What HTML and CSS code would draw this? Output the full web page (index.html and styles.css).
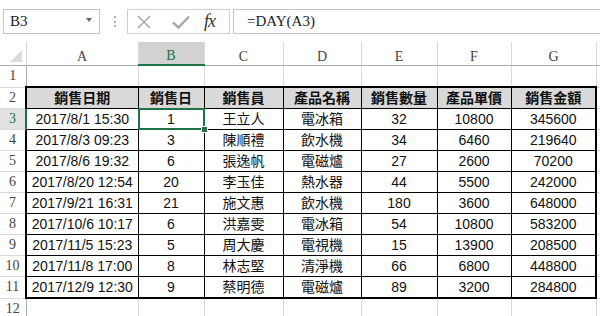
FILE: index.html
```html
<!doctype html>
<html lang="zh-Hant">
<head>
    <meta charset="UTF-8">
    <title>Excel - DAY</title>
    <link rel="stylesheet" href="styles.css">
</head>
<body>
<div class="toolbar">
    <div class="name-box">
        <span>B3</span>
        <i class="arrow"></i>
    </div>
    <i class="dots"></i>
    <div class="tools">
        <svg class="ico" width="16" height="16" viewBox="0 0 16 16"><path d="M2 2L14 14M14 2L2 14" stroke="#a8a8a8" stroke-width="1.6" fill="none"/></svg>
        <svg class="ico" width="20" height="16" viewBox="0 0 20 16"><path d="M2 8.5L7.5 13.5L18 2.5" stroke="#a8a8a8" stroke-width="2.4" fill="none"/></svg>
        <span class="fx">fx</span>
    </div>
    <div class="formula">=DAY(A3)</div>
</div>
<div class="grid">
    <table class="sheet">
        <colgroup>
            <col class="c-head">
            <col class="c-a">
            <col class="c-b">
            <col class="c-c">
            <col class="c-d">
            <col class="c-e">
            <col class="c-f">
            <col class="c-g">
            <col class="c-h">
        </colgroup>
        <tr class="letters">
            <th class="corner"><i class="tri"></i></th>
            <th>A</th><th class="on">B</th><th>C</th><th>D</th><th>E</th><th>F</th><th>G</th><th></th>
        </tr>
        <tr>
            <th class="num">1</th>
            <td></td><td></td><td></td><td></td><td></td><td></td><td></td><td></td>
        </tr>
        <tr class="top head">
            <th class="num">2</th>
            <td class="a">銷售日期</td><td>銷售日</td><td>銷售員</td><td>產品名稱</td><td>銷售數量</td><td>產品單價</td><td class="g">銷售金額</td><td class="out"></td>
        </tr>
        <tr>
            <th class="num on">3</th>
            <td class="a">2017/8/1 15:30</td><td class="sel">1<div class="cursor"></div></td><td>王立人</td><td>電冰箱</td><td>32</td><td>10800</td><td class="g">345600</td><td class="out"></td>
        </tr>
        <tr>
            <th class="num">4</th>
            <td class="a">2017/8/3 09:23</td><td>3</td><td>陳順禮</td><td>飲水機</td><td>34</td><td>6460</td><td class="g">219640</td><td class="out"></td>
        </tr>
        <tr>
            <th class="num">5</th>
            <td class="a">2017/8/6 19:32</td><td>6</td><td>張逸帆</td><td>電磁爐</td><td>27</td><td>2600</td><td class="g">70200</td><td class="out"></td>
        </tr>
        <tr>
            <th class="num">6</th>
            <td class="a">2017/8/20 12:54</td><td>20</td><td>李玉佳</td><td>熱水器</td><td>44</td><td>5500</td><td class="g">242000</td><td class="out"></td>
        </tr>
        <tr>
            <th class="num">7</th>
            <td class="a">2017/9/21 16:31</td><td>21</td><td>施文惠</td><td>飲水機</td><td>180</td><td>3600</td><td class="g">648000</td><td class="out"></td>
        </tr>
        <tr>
            <th class="num">8</th>
            <td class="a">2017/10/6 10:17</td><td>6</td><td>洪嘉雯</td><td>電冰箱</td><td>54</td><td>10800</td><td class="g">583200</td><td class="out"></td>
        </tr>
        <tr>
            <th class="num">9</th>
            <td class="a">2017/11/5 15:23</td><td>5</td><td>周大慶</td><td>電視機</td><td>15</td><td>13900</td><td class="g">208500</td><td class="out"></td>
        </tr>
        <tr>
            <th class="num">10</th>
            <td class="a">2017/11/8 17:00</td><td>8</td><td>林志堅</td><td>清淨機</td><td>66</td><td>6800</td><td class="g">448800</td><td class="out"></td>
        </tr>
        <tr class="bottom">
            <th class="num">11</th>
            <td class="a">2017/12/9 12:30</td><td>9</td><td>蔡明德</td><td>電磁爐</td><td>89</td><td>3200</td><td class="g">284800</td><td class="out"></td>
        </tr>
        <tr>
            <th class="num">12</th>
            <td></td><td></td><td></td><td></td><td></td><td></td><td></td><td></td>
        </tr>
    </table>
</div>
</body>
</html>
```
FILE: styles.css
```css
* {
    margin: 0;
    padding: 0;
}

body {
    background-color: #fff;
    width: 600px;
    overflow: hidden;
    font-family: "Liberation Sans", "Noto Sans CJK TC", sans-serif;
}

/* formula bar */
.toolbar {
    height: 42px;
    display: flex;
    align-items: flex-start;
    padding: 9px 0 0 3px;
    box-sizing: border-box;
}

.name-box {
    width: 97px;
    height: 25px;
    box-sizing: border-box;
    border: 1px solid #c6c6c6;
    display: flex;
    align-items: center;
    justify-content: space-between;
    padding: 0 7px 0 6px;
    font-family: "Liberation Serif", serif;
    font-size: 15px;
    color: #222;
}

.arrow {
    width: 0;
    height: 0;
    border-left: 3.5px solid transparent;
    border-right: 3.5px solid transparent;
    border-top: 4px solid #666;
    margin-top: -3px;
}

.dots {
    width: 0;
    height: 11px;
    margin: 7px 0 0 14px;
    border-left: 2px dotted #b0b0b0;
}

.tools {
    width: 103px;
    height: 25px;
    margin-left: 11px;
    box-sizing: border-box;
    border: 1px solid #d0d0d0;
    display: flex;
    align-items: center;
    padding-left: 8px;
}

.tools .ico:nth-child(2) {
    margin-left: 19px;
}

.fx {
    margin-left: 13px;
    font-family: "Liberation Serif", serif;
    font-style: italic;
    font-size: 18px;
    color: #333;
    letter-spacing: -1px;
}

.formula {
    flex: 1;
    height: 25px;
    margin-left: 3px;
    margin-right: -2px;
    box-sizing: border-box;
    border: 1px solid #c6c6c6;
    padding-left: 13px;
    line-height: 23px;
    font-family: "Liberation Serif", serif;
    font-size: 15px;
    color: #222;
}

/* sheet */
.grid {
    width: 600px;
    overflow: hidden;
}

.sheet {
    border-collapse: collapse;
    table-layout: fixed;
    width: 630px;
    font-size: 14px;
    color: #111;
}

.c-head { width: 26px; }
.c-a { width: 112px; }
.c-b { width: 66px; }
.c-c { width: 79px; }
.c-d { width: 78px; }
.c-e { width: 76px; }
.c-f { width: 74px; }
.c-g { width: 85px; }
.c-h { width: 34px; }

.sheet td {
    height: 20px;
    border: 1px solid #dadada;
    text-align: center;
    white-space: nowrap;
    overflow: hidden;
    padding: 0;
    line-height: 18px;
}

.sheet th {
    font-family: "Liberation Serif", serif;
    font-weight: normal;
    font-size: 14px;
    color: #444;
    padding: 0;
}

.letters th {
    height: 22px;
    vertical-align: bottom;
    line-height: 16px;
    border-right: 1px solid #dadada;
    border-bottom: 1px solid #ababab;
}

.letters th.on {
    background-color: #d2d2d2;
    color: #217346;
    border-bottom: 2px solid #217346;
}

.corner {
    text-align: right;
}

.tri {
    display: inline-block;
    vertical-align: bottom;
    width: 0;
    height: 0;
    border-left: 12px solid transparent;
    border-bottom: 12px solid #dcdcdc;
    margin: 0 4px 3px 0;
}

.num {
    border-right: 1px solid #ababab;
    border-bottom: 1px solid #dadada;
}

.num.on {
    color: #217346;
    background-color: #e1e1e1;
    border-right: 2px solid #217346;
}

.top td,
.bottom td,
.top + tr td,
tr:nth-child(n+4) td {
    border-color: #000;
}

.sheet tr:nth-child(n+4) td.out,
.sheet tr.top td.out {
    border-color: #dadada;
    border-left: 2px solid #000;
}

.top td {
    border-top: 2px solid #000;
}

.top td.out {
    border-top: 1px solid #dadada;
}

.head td {
    background-color: #d9d9d9;
    font-weight: bold;
}

.head td.out {
    background-color: transparent;
}

.sheet td.a {
    border-left: 2px solid #000;
}

.sheet td.g {
    border-right: 2px solid #000;
}

.bottom td {
    border-bottom: 2px solid #000;
}

.bottom td.out {
    border-bottom: 1px solid #dadada;
}

.bottom + tr td {
    border-color: #dadada;
}

.sheet td.sel {
    position: relative;
    overflow: visible;
}

.cursor {
    position: absolute;
    left: -1px;
    top: -1px;
    right: -1px;
    bottom: -1px;
    border: 2px solid #217346;
}

.cursor::after {
    content: "";
    position: absolute;
    right: -5px;
    bottom: -5px;
    width: 5px;
    height: 5px;
    background-color: #217346;
    border: 1px solid #fff;
    z-index: 1;
}
```
